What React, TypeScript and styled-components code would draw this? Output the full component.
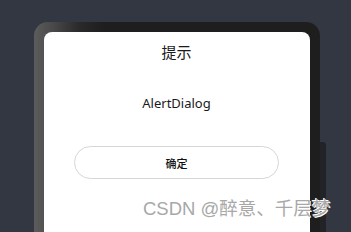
import React from "react"
import styled, { createGlobalStyle } from "styled-components"

const Global = createGlobalStyle`
  html, body {
    margin: 0;
    padding: 0;
    background: #333741;
    overflow: hidden;
  }
  body {
    font-family: "Noto Sans", "Noto Sans CJK SC", sans-serif;
  }
`

const Page = styled.div`
  position: relative;
  width: 351px;
  height: 232px;
  overflow: hidden;
  padding: 22px 0 0 34px;
  box-sizing: border-box;
`

const Frame = styled.div`
  position: relative;
  width: 286px;
  height: 230px;
  box-sizing: border-box;
  padding: 10px;
  border-radius: 14px;
  background:
    linear-gradient(to right, #5c5c5c 0px, #4a4a4a 18px, #2a2a2a 45px, #1e1e1e 70px, #1e1e1e 100%);
`

const SideKey = styled.div`
  position: absolute;
  right: -6px;
  top: 120px;
  width: 6px;
  height: 120px;
  border-radius: 0 3px 0 0;
  background: #222326;
`

const Screen = styled.div`
  height: 100%;
  background: #fff;
  border-radius: 8px 8px 0 0;
  display: flex;
  flex-direction: column;
  align-items: center;
  padding: 9px 31px 0 30px;
  box-sizing: border-box;
`

const Title = styled.div`
  font-size: 15px;
  line-height: 22px;
  color: #1a1a1a;
`

const Message = styled.div`
  margin-top: 31px;
  font-size: 13px;
  line-height: 18px;
  color: #1a1a1a;
`

const Button = styled.div`
  margin-top: 34px;
  width: 100%;
  height: 33px;
  box-sizing: border-box;
  border: 1px solid #d6d6d6;
  border-radius: 17px;
  display: flex;
  align-items: center;
  justify-content: center;
  font-size: 11px;
  font-weight: 500;
  color: #111;
`

const Watermark = styled.div`
  position: absolute;
  left: 143px;
  top: 196px;
  font-family: "Liberation Sans", "Noto Sans CJK SC", sans-serif;
  font-size: 18.5px;
  line-height: 26px;
  color: #a8a8a8;
  white-space: nowrap;
  text-shadow: 0 0 1px #fff, 1px 1px 0 #fff, -1px -1px 0 #fff;
`

export default function App() {
  return (
    <>
      <Global />
      <Page>
        <Frame>
          <Screen>
            <Title>提示</Title>
            <Message>AlertDialog</Message>
            <Button>确定</Button>
          </Screen>
          <SideKey />
        </Frame>
        <Watermark>CSDN @醉意、千层梦</Watermark>
      </Page>
    </>
  )
}
